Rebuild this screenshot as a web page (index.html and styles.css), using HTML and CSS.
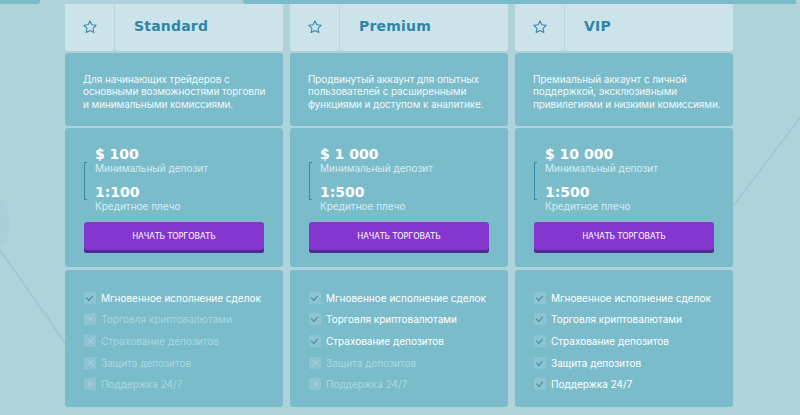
FILE: index.html
```html
<!DOCTYPE html>
<html>
<head>
    <title>Тарифы</title>
    <link rel="stylesheet" href="styles.css">
</head>
<body>
    <svg class="bg-decor" width="800" height="415" viewBox="0 0 800 415">
        <circle cx="-28" cy="222" r="38" fill="#a9cfd9"/>
        <line x1="0" y1="250" x2="70" y2="350" stroke="#9dc8d3" stroke-width="1.5"/>
        <line x1="800" y1="118" x2="730" y2="210" stroke="#9dc8d3" stroke-width="1.5"/>
    </svg>

    <div class="top-edge">
        <div class="edge-left"></div>
        <div class="edge-right"></div>
    </div>

    <div class="plans">
        <div class="plan">
            <div class="plan-head">
                <div class="plan-icon">
                    <svg width="16" height="16" viewBox="0 0 24 24"><path d="M12 2.8l2.8 5.9 6.4.8-4.7 4.4 1.2 6.4L12 17.2l-5.7 3.1 1.2-6.4-4.7-4.4 6.4-.8z" fill="none" stroke="#3289a8" stroke-width="1.6" stroke-linejoin="round"/></svg>
                </div>
                <div class="plan-title">Standard</div>
            </div>
            <div class="plan-desc">Для начинающих трейдеров с основными возможностями торговли и минимальными комиссиями.</div>
            <div class="plan-price">
                <div class="stats">
                    <div class="stat-value">$ 100</div>
                    <div class="stat-label">Минимальный депозит</div>
                    <div class="stat-value">1:100</div>
                    <div class="stat-label">Кредитное плечо</div>
                </div>
                <button class="trade-btn">НАЧАТЬ ТОРГОВАТЬ</button>
            </div>
            <ul class="features">
                <li class="on"><span class="box"></span>Мгновенное исполнение сделок</li>
                <li><span class="box"></span>Торговля криптовалютами</li>
                <li><span class="box"></span>Страхование депозитов</li>
                <li><span class="box"></span>Защита депозитов</li>
                <li><span class="box"></span>Поддержка 24/7</li>
            </ul>
        </div>

        <div class="plan">
            <div class="plan-head">
                <div class="plan-icon">
                    <svg width="16" height="16" viewBox="0 0 24 24"><path d="M12 2.8l2.8 5.9 6.4.8-4.7 4.4 1.2 6.4L12 17.2l-5.7 3.1 1.2-6.4-4.7-4.4 6.4-.8z" fill="none" stroke="#3289a8" stroke-width="1.6" stroke-linejoin="round"/></svg>
                </div>
                <div class="plan-title">Premium</div>
            </div>
            <div class="plan-desc">Продвинутый аккаунт для опытных пользователей с расширенными функциями и доступом к аналитике.</div>
            <div class="plan-price">
                <div class="stats">
                    <div class="stat-value">$ 1 000</div>
                    <div class="stat-label">Минимальный депозит</div>
                    <div class="stat-value">1:500</div>
                    <div class="stat-label">Кредитное плечо</div>
                </div>
                <button class="trade-btn">НАЧАТЬ ТОРГОВАТЬ</button>
            </div>
            <ul class="features">
                <li class="on"><span class="box"></span>Мгновенное исполнение сделок</li>
                <li class="on"><span class="box"></span>Торговля криптовалютами</li>
                <li class="on"><span class="box"></span>Страхование депозитов</li>
                <li><span class="box"></span>Защита депозитов</li>
                <li><span class="box"></span>Поддержка 24/7</li>
            </ul>
        </div>

        <div class="plan">
            <div class="plan-head">
                <div class="plan-icon">
                    <svg width="16" height="16" viewBox="0 0 24 24"><path d="M12 2.8l2.8 5.9 6.4.8-4.7 4.4 1.2 6.4L12 17.2l-5.7 3.1 1.2-6.4-4.7-4.4 6.4-.8z" fill="none" stroke="#3289a8" stroke-width="1.6" stroke-linejoin="round"/></svg>
                </div>
                <div class="plan-title">VIP</div>
            </div>
            <div class="plan-desc">Премиальный аккаунт с личной поддержкой, эксклюзивными привилегиями и низкими комиссиями.</div>
            <div class="plan-price">
                <div class="stats">
                    <div class="stat-value">$ 10 000</div>
                    <div class="stat-label">Минимальный депозит</div>
                    <div class="stat-value">1:500</div>
                    <div class="stat-label">Кредитное плечо</div>
                </div>
                <button class="trade-btn">НАЧАТЬ ТОРГОВАТЬ</button>
            </div>
            <ul class="features">
                <li class="on"><span class="box"></span>Мгновенное исполнение сделок</li>
                <li class="on"><span class="box"></span>Торговля криптовалютами</li>
                <li class="on"><span class="box"></span>Страхование депозитов</li>
                <li class="on"><span class="box"></span>Защита депозитов</li>
                <li class="on"><span class="box"></span>Поддержка 24/7</li>
            </ul>
        </div>
    </div>
</body>
</html>
```

FILE: styles.css
```css
body {
    margin: 0;
    width: 800px;
    height: 415px;
    overflow: hidden;
    background-color: #afd2db;
    font-family: Inter, "Noto Sans", sans-serif;
    position: relative;
}

.bg-decor {
    position: absolute;
    left: 0;
    top: 0;
    z-index: 0;
}

.top-edge {
    position: relative;
    display: flex;
    height: 4px;
}

.edge-left {
    width: 40px;
    background-color: #7bbccb;
    border-bottom-right-radius: 3px;
}

.edge-right {
    margin-left: 203px;
    width: 553px;
    background-color: #7bbccb;
    border-bottom-left-radius: 3px;
}

.plans {
    position: relative;
    display: grid;
    grid-template-columns: repeat(3, 218px);
    column-gap: 7px;
    margin-left: 65px;
    width: 668px;
}

.plan {
    display: flex;
    flex-direction: column;
}

.plan-head {
    display: grid;
    grid-template-columns: 49px 1fr;
    column-gap: 1px;
    height: 47px;
    background-color: #b6d6de;
}

.plan-icon,
.plan-title {
    background-color: #cde3ea;
    display: flex;
    align-items: center;
}

.plan-icon {
    justify-content: center;
    border-radius: 0 0 3px 3px;
}

.plan-icon svg {
    margin-top: -2px;
}

.plan-title {
    padding-left: 19px;
    padding-bottom: 3px;
    font-family: "DejaVu Sans", sans-serif;
    font-weight: bold;
    font-size: 14px;
    letter-spacing: 0.2px;
    color: #2e86a6;
    border-radius: 0 0 3px 3px;
}

.plan-desc {
    margin-top: 2px;
    height: 73px;
    box-sizing: border-box;
    padding: 20px 12px 0 18px;
    background-color: #7bbccb;
    border-radius: 3px;
    color: #eef8fa;
    font-size: 10px;
    letter-spacing: -0.1px;
    line-height: 12.4px;
}

.plan-price {
    margin-top: 2px;
    height: 139px;
    box-sizing: border-box;
    padding: 18px 19px 0 19px;
    background-color: #7bbccb;
    border-radius: 3px;
}

.stats {
    position: relative;
    padding-left: 11px;
}

.stats::before {
    content: "";
    position: absolute;
    left: 0;
    top: 16px;
    width: 2px;
    height: 36px;
    border: 1px solid #3a8ba6;
    border-right: none;
}

.stat-value {
    font-family: "DejaVu Sans", sans-serif;
    font-weight: bold;
    font-size: 14px;
    line-height: 16px;
    color: #ffffff;
}

.stat-label {
    font-size: 10px;
    line-height: 13px;
    color: #d5ecf1;
    margin-bottom: 9px;
}

.trade-btn {
    display: block;
    width: 180px;
    height: 31px;
    margin-top: 0;
    border: none;
    border-radius: 3px;
    background-color: #8536cf;
    box-shadow: inset 0 -3px 0 #4b2c8c;
    padding: 0 0 3px 0;
    color: #ffffff;
    font-family: "DejaVu Sans Condensed", "DejaVu Sans", sans-serif;
    font-size: 9px;
    letter-spacing: -0.1px;
    cursor: pointer;
}

.features {
    list-style: none;
    margin: 3px 0 0 0;
    height: 137px;
    box-sizing: border-box;
    padding: 17px 0 0 19px;
    background-color: #7bbccb;
    border-radius: 3px;
}

.features li {
    display: flex;
    align-items: center;
    height: 21.6px;
    font-size: 10px;
    color: #a9d7e1;
}

.features li.on {
    color: #ffffff;
}

.box {
    position: relative;
    width: 12px;
    height: 12px;
    margin-right: 5px;
    background-color: rgba(255, 255, 255, 0.13);
    border-radius: 1px;
}

.box::before,
.box::after {
    content: "";
    position: absolute;
    left: 5.5px;
    top: 2px;
    width: 1px;
    height: 8px;
    background-color: rgba(255, 255, 255, 0.18);
    transform: rotate(45deg);
}

.box::after {
    transform: rotate(-45deg);
}

.features li.on .box::before {
    left: 3px;
    top: 5px;
    width: 1px;
    height: 4px;
    background-color: #3d8da8;
    transform: rotate(-45deg);
}

.features li.on .box::after {
    left: 6px;
    top: 3px;
    width: 1px;
    height: 7px;
    background-color: #3d8da8;
    transform: rotate(40deg);
}
```
